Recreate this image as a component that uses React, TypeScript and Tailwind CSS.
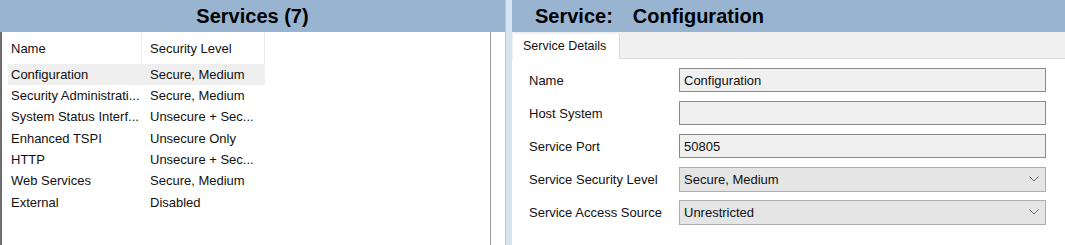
import React from 'react';

const services = [
  { name: 'Configuration', level: 'Secure, Medium' },
  { name: 'Security Administrati...', level: 'Secure, Medium' },
  { name: 'System Status Interf...', level: 'Unsecure + Sec...' },
  { name: 'Enhanced TSPI', level: 'Unsecure Only' },
  { name: 'HTTP', level: 'Unsecure + Sec...' },
  { name: 'Web Services', level: 'Secure, Medium' },
  { name: 'External', level: 'Disabled' },
];

const Chevron: React.FC = () => (
  <svg width="10" height="6" viewBox="0 0 10 6" className="shrink-0">
    <path d="M0.5 0.5 L5 5 L9.5 0.5" fill="none" stroke="#6b6b6b" strokeWidth="1" />
  </svg>
);

const TextField: React.FC<{ label: string; value: string }> = ({ label, value }) => (
  <div className="flex items-center h-[24px]">
    <div className="w-[150px] shrink-0 pt-[1px]">{label}</div>
    <div className="w-[367px] h-[24px] bg-[#f0f0f0] border border-[#8a8a8a] flex items-center pl-[4px] pt-[1px]">
      {value}
    </div>
  </div>
);

const SelectField: React.FC<{ label: string; value: string }> = ({ label, value }) => (
  <div className="flex items-center h-[24px]">
    <div className="w-[150px] shrink-0 pt-[1px]">{label}</div>
    <div className="w-[367px] h-[25px] bg-[#e5e5e5] border border-[#adadad] flex items-center justify-between pl-[4px] pr-[6px]">
      <span className="pt-[1px]">{value}</span>
      <Chevron />
    </div>
  </div>
);

export default function App() {
  return (
    <div className="w-[1065px] h-[245px] flex overflow-hidden bg-white text-[13px] text-[#111] font-['Liberation_Sans',Arial,sans-serif]">
      {/* Services list */}
      <div className="w-[505px] shrink-0 flex flex-col">
        <div className="h-[32px] bg-[#99b4d1] flex items-center justify-center text-[20px] font-bold text-black">
          Services (7)
        </div>
        <div className="flex-1 flex bg-white">
          <div className="w-[491px] border-l-2 border-l-[#6e6e6e] border-r border-r-[#9a9a9a] flex flex-col">
            <div className="h-[32px] flex">
              <div className="w-[140px] pl-[9px] pt-[1px] flex items-center border-r border-[#ececec]">Name</div>
              <div className="w-[123px] pl-[8px] pt-[1px] flex items-center border-r border-[#ececec]">Security Level</div>
            </div>
            {services.map((s, i) => (
              <div
                key={s.name}
                className={`ml-[6px] w-[257px] h-[21.3px] flex items-center ${i === 0 ? 'bg-[#efefef]' : ''}`}
              >
                <div className="w-[139px] pl-[3px] whitespace-nowrap">{s.name}</div>
                <div className="pl-[3px] whitespace-nowrap">{s.level}</div>
              </div>
            ))}
          </div>
        </div>
      </div>

      {/* Splitter */}
      <div className="w-[7px] shrink-0 bg-[#d7e4f2] border-l border-[#b8c8da]" />

      {/* Service details */}
      <div className="flex-1 flex flex-col">
        <div className="h-[32px] bg-[#99b4d1] flex items-center pl-[23px] text-[20px] font-bold text-black">
          <span>Service:</span>
          <span className="ml-[20px]">Configuration</span>
        </div>
        <div className="h-[27px] bg-[#f0f0f0] border-b border-[#dcdcdc] flex items-end">
          <div className="ml-[1px] w-[107px] h-[25px] -mb-px bg-white border-r border-[#d9d9d9] flex items-center pl-[10px] text-[12.5px]">
            Service Details
          </div>
        </div>
        <div className="flex-1 bg-white pl-[17px] pt-[9px] flex flex-col gap-[9px]">
          <TextField label="Name" value="Configuration" />
          <TextField label="Host System" value="" />
          <TextField label="Service Port" value="50805" />
          <SelectField label="Service Security Level" value="Secure, Medium" />
          <SelectField label="Service Access Source" value="Unrestricted" />
        </div>
      </div>
    </div>
  );
}
